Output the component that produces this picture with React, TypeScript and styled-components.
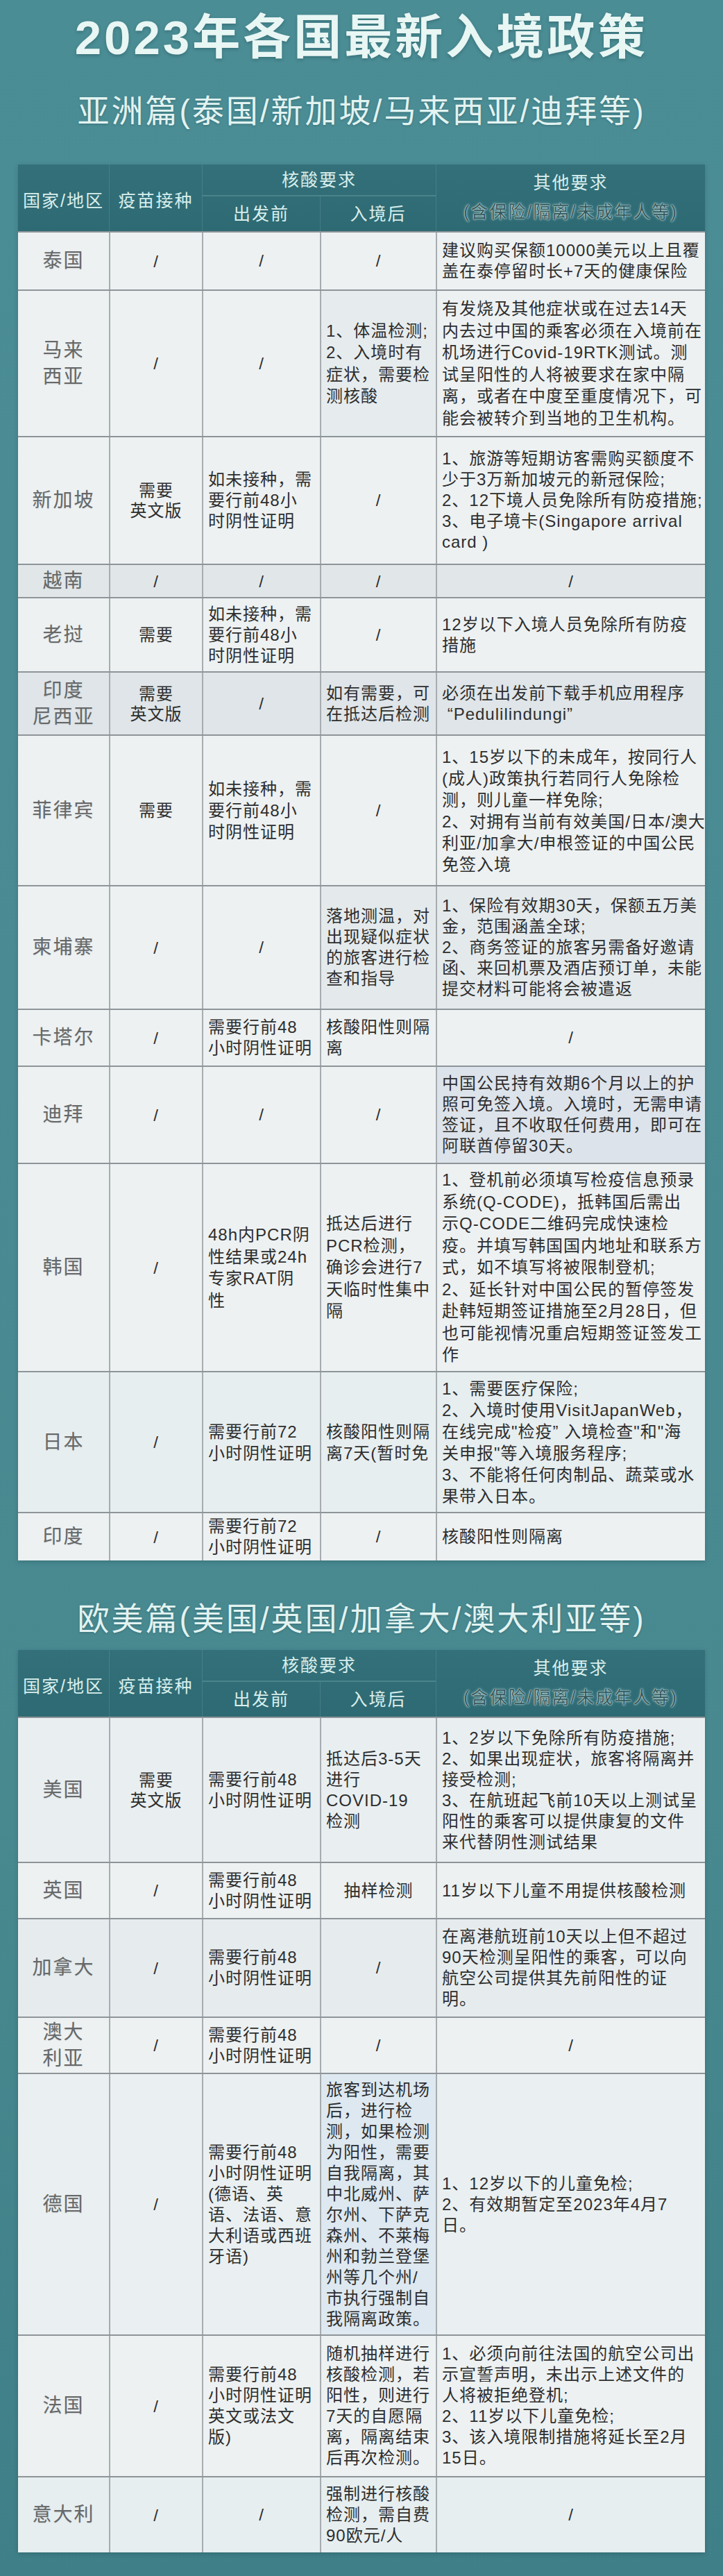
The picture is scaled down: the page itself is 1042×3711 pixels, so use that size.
import React from "react";
import styled, { createGlobalStyle } from "styled-components";

const GlobalStyle = createGlobalStyle`
  html, body { margin: 0; padding: 0; }
  body {
    background: #4a8a92;
    font-family: "Liberation Sans", "Noto Sans CJK SC", sans-serif;
  }
`;

const COLS = "131px 134px 170px 167px 1fr";

const Page = styled.div`
  width: 1042px;
  min-height: 3711px;
  box-sizing: border-box;
  padding: 20px 26px 34px;
  background: linear-gradient(180deg, #4b8d95 0%, #4a8b93 40%, #488990 70%, #3f7f87 100%);
  display: flex;
  flex-direction: column;
  align-items: center;
`;

const Title = styled.h1`
  margin: 0;
  font-family: "Liberation Sans", "Noto Sans CJK SC", sans-serif;
  font-weight: 700;
  font-size: 69px;
  letter-spacing: 4px;
  line-height: 70px;
  color: #e8f6f4;
  text-shadow: 0 2px 4px rgba(20, 60, 66, 0.35);
`;

const SectionTitle = styled.h2<{ $mt: number; $mb: number }>`
  margin: ${(p) => p.$mt}px 0 ${(p) => p.$mb}px;
  font-family: "Liberation Sans", "Noto Sans CJK SC", sans-serif;
  font-weight: 400;
  font-size: 46px;
  letter-spacing: 3px;
  line-height: 56px;
  color: #e2f3f1;
  text-shadow: 0 1px 3px rgba(20, 60, 66, 0.35);
`;

const Table = styled.div`
  width: 990px;
  display: flex;
  flex-direction: column;
  box-shadow: 0 2px 6px rgba(20, 50, 55, 0.25);
`;

const Head = styled.div`
  display: grid;
  grid-template-columns: ${COLS};
  grid-template-rows: 46px 50px;
  background: linear-gradient(180deg, #33707a 0%, #2e6a73 100%);
  color: #d8efed;
  font-size: 25px;
  letter-spacing: 2px;
  line-height: 36px;
`;

const HeadCell = styled.div<{ $col: string; $row: string; $divider?: boolean; $first?: boolean }>`
  grid-column: ${(p) => p.$col};
  grid-row: ${(p) => p.$row};
  display: flex;
  align-items: center;
  justify-content: center;
  border-left: ${(p) => (p.$first ? "none" : "1px solid rgba(160, 205, 208, 0.18)")};
  border-bottom: ${(p) => (p.$divider ? "2px solid rgba(150, 200, 204, 0.25)" : "none")};
`;

const HeadLow = styled(HeadCell)`
  align-items: flex-end;
  padding-bottom: 26px;
`;

const HeadStack = styled(HeadCell)`
  flex-direction: column;
  justify-content: flex-start;
  padding-top: 8px;
  gap: 6px;
`;

const HeadNote = styled.span`
  color: #34595d;
  text-shadow: 0 0 2px #cfe8e6, 0 0 1px #e4f3f2, 0 0 4px rgba(200, 232, 230, 0.6);
`;

const Row = styled.div<{ $h: number; $lh: number; $bg: string }>`
  display: grid;
  grid-template-columns: ${COLS};
  height: ${(p) => p.$h}px;
  box-sizing: border-box;
  border-top: 2px solid #8e9599;
  background: ${(p) => p.$bg};
  line-height: ${(p) => p.$lh}px;
`;

const Cell = styled.div<{ $center?: boolean; $bg?: string }>`
  display: flex;
  align-items: center;
  justify-content: ${(p) => (p.$center ? "center" : "flex-start")};
  text-align: ${(p) => (p.$center ? "center" : "left")};
  padding: 0 ${(p) => (p.$center ? "0" : "7px")};
  border-left: 2px solid #a6acaf;
  background: ${(p) => p.$bg ?? "transparent"};
  white-space: pre;
  font-size: 24px;
  letter-spacing: 1px;
  color: #2e2e2e;
  min-width: 0;
`;

const CountryCell = styled(Cell)`
  border-left: none;
  font-size: 28px;
  letter-spacing: 2px;
  line-height: 38px;
  color: #666869;
  text-shadow: 0 1px 1px rgba(0, 0, 0, 0.12);
`;

const VaccineCell = styled(Cell)`
  line-height: 29px;
`;

type RowData = {
  country: string;
  vac: string;
  before: string;
  after: string;
  other: string;
  h: number;
  lh?: number;
  bg?: string;
  afterCenter?: boolean;
  afterBg?: string;
  otherBg?: string;
};

const asia: RowData[] = [
  {
    country: "泰国",
    vac: "/",
    before: "/",
    after: "/",
    other: "建议购买保额10000美元以上且覆\n盖在泰停留时长+7天的健康保险",
    h: 84,
    lh: 30,
  },
  {
    country: "马来\n西亚",
    vac: "/",
    before: "/",
    after: "1、体温检测;\n2、入境时有\n症状，需要检\n测核酸",
    other:
      "有发烧及其他症状或在过去14天\n内去过中国的乘客必须在入境前在\n机场进行Covid-19RTK测试。测\n试呈阳性的人将被要求在家中隔\n离，或者在中度至重度情况下，可\n能会被转介到当地的卫生机构。",
    h: 211,
    lh: 31.5,
    afterBg: "#e6ecee",
  },
  {
    country: "新加坡",
    vac: "需要\n英文版",
    before: "如未接种，需\n要行前48小\n时阴性证明",
    after: "/",
    other:
      "1、旅游等短期访客需购买额度不\n少于3万新加坡元的新冠保险;\n2、12下境人员免除所有防疫措施;\n3、电子境卡(Singapore arrival\ncard )",
    h: 184,
    lh: 30,
  },
  { country: "越南", vac: "/", before: "/", after: "/", other: "/", h: 48, bg: "#e1e7e9" },
  {
    country: "老挝",
    vac: "需要",
    before: "如未接种，需\n要行前48小\n时阴性证明",
    after: "/",
    other: "12岁以下入境人员免除所有防疫\n措施",
    h: 107,
    lh: 30,
  },
  {
    country: "印度\n尼西亚",
    vac: "需要\n英文版",
    before: "/",
    after: "如有需要，可\n在抵达后检测",
    other: "必须在出发前下载手机应用程序\n \u201cPedulilindungi\u201d",
    h: 91,
    lh: 30,
    bg: "#dfe5e8",
  },
  {
    country: "菲律宾",
    vac: "需要",
    before: "如未接种，需\n要行前48小\n时阴性证明",
    after: "/",
    other:
      "1、15岁以下的未成年，按同行人\n(成人)政策执行若同行人免除检\n测，则儿童一样免除;\n2、对拥有当前有效美国/日本/澳大\n利亚/加拿大/申根签证的中国公民\n免签入境",
    h: 217,
    lh: 31,
  },
  {
    country: "柬埔寨",
    vac: "/",
    before: "/",
    after: "落地测温，对\n出现疑似症状\n的旅客进行检\n查和指导",
    other:
      "1、保险有效期30天，保额五万美\n金，范围涵盖全球;\n2、商务签证的旅客另需备好邀请\n函、来回机票及酒店预订单，未能\n提交材料可能将会被遣返",
    h: 178,
    lh: 30,
    afterBg: "#e4eaec",
    otherBg: "#e4eaec",
  },
  {
    country: "卡塔尔",
    vac: "/",
    before: "需要行前48\n小时阴性证明",
    after: "核酸阳性则隔\n离",
    other: "/",
    h: 82,
    lh: 30,
  },
  {
    country: "迪拜",
    vac: "/",
    before: "/",
    after: "/",
    other:
      "中国公民持有效期6个月以上的护\n照可免签入境。入境时，无需申请\n签证，且不收取任何费用，即可在\n阿联酋停留30天。",
    h: 140,
    lh: 30,
    otherBg: "#dde3ea",
  },
  {
    country: "韩国",
    vac: "/",
    before: "48h内PCR阴\n性结果或24h\n专家RAT阴\n性",
    after: "抵达后进行\nPCR检测，\n确诊会进行7\n天临时性集中\n隔",
    other:
      "1、登机前必须填写检疫信息预录\n系统(Q-CODE)，抵韩国后需出\n示Q-CODE二维码完成快速检\n疫。并填写韩国国内地址和联系方\n式，如不填写将被限制登机;\n2、延长针对中国公民的暂停签发\n赴韩短期签证措施至2月28日，但\n也可能视情况重启短期签证签发工\n作",
    h: 300,
    lh: 31.5,
  },
  {
    country: "日本",
    vac: "/",
    before: "需要行前72\n小时阴性证明",
    after: "核酸阳性则隔\n离7天(暂时免",
    other:
      "1、需要医疗保险;\n2、入境时使用VisitJapanWeb，\n在线完成\"检疫\u201d 入境检查\"和\"海\n关申报\"等入境服务程序;\n3、不能将任何肉制品、蔬菜或水\n果带入日本。",
    h: 203,
    lh: 31,
    bg: "#e7eef0",
  },
  {
    country: "印度",
    vac: "/",
    before: "需要行前72\n小时阴性证明",
    after: "/",
    other: "核酸阳性则隔离",
    h: 70,
    lh: 30,
  },
];

const west: RowData[] = [
  {
    country: "美国",
    vac: "需要\n英文版",
    before: "需要行前48\n小时阴性证明",
    after: "抵达后3-5天\n进行\nCOVID-19\n检测",
    other:
      "1、2岁以下免除所有防疫措施;\n2、如果出现症状，旅客将隔离并\n接受检测;\n3、在航班起飞前10天以上测试呈\n阳性的乘客可以提供康复的文件\n来代替阴性测试结果",
    h: 209,
    lh: 30,
    bg: "#e9eff1",
  },
  {
    country: "英国",
    vac: "/",
    before: "需要行前48\n小时阴性证明",
    after: "抽样检测",
    afterCenter: true,
    other: "11岁以下儿童不用提供核酸检测",
    h: 81,
    lh: 30,
  },
  {
    country: "加拿大",
    vac: "/",
    before: "需要行前48\n小时阴性证明",
    after: "/",
    other:
      "在离港航班前10天以上但不超过\n90天检测呈阳性的乘客，可以向\n航空公司提供其先前阳性的证\n明。",
    h: 142,
    lh: 30,
    bg: "#e6ecee",
  },
  {
    country: "澳大\n利亚",
    vac: "/",
    before: "需要行前48\n小时阴性证明",
    after: "/",
    other: "/",
    h: 81,
    lh: 30,
  },
  {
    country: "德国",
    vac: "/",
    before: "需要行前48\n小时阴性证明\n(德语、英\n语、法语、意\n大利语或西班\n牙语)",
    after:
      "旅客到达机场\n后，进行检\n测，如果检测\n为阳性，需要\n自我隔离，其\n中北威州、萨\n尔州、下萨克\n森州、不莱梅\n州和勃兰登堡\n州等几个州/\n市执行强制自\n我隔离政策。",
    other: "1、12岁以下的儿童免检;\n2、有效期暂定至2023年4月7\n日。",
    h: 377,
    lh: 30,
    bg: "#eaf0f1",
    afterBg: "#dde8f0",
  },
  {
    country: "法国",
    vac: "/",
    before: "需要行前48\n小时阴性证明\n英文或法文\n版)",
    after: "随机抽样进行\n核酸检测，若\n阳性，则进行\n7天的自愿隔\n离，隔离结束\n后再次检测。",
    other:
      "1、必须向前往法国的航空公司出\n示宣誓声明，未出示上述文件的\n人将被拒绝登机;\n2、11岁以下儿童免检;\n3、该入境限制措施将延长至2月\n15日。",
    h: 204,
    lh: 30,
  },
  {
    country: "意大利",
    vac: "/",
    before: "/",
    after: "强制进行核酸\n检测，需自费\n90欧元/人",
    other: "/",
    h: 110,
    lh: 30,
    bg: "#e6eef0",
  },
];

const isSlash = (t: string) => t === "/";

const TableHead: React.FC = () => (
  <Head>
    <HeadLow $col="1" $row="1 / 3" $first>
      国家/地区
    </HeadLow>
    <HeadLow $col="2" $row="1 / 3">
      疫苗接种
    </HeadLow>
    <HeadCell $col="3 / 5" $row="1" $divider>
      核酸要求
    </HeadCell>
    <HeadCell $col="3" $row="2">
      出发前
    </HeadCell>
    <HeadCell $col="4" $row="2">
      入境后
    </HeadCell>
    <HeadStack $col="5" $row="1 / 3">
      <span>其他要求</span>
      <HeadNote>(含保险/隔离/未成年人等)</HeadNote>
    </HeadStack>
  </Head>
);

const PolicyTable: React.FC<{ rows: RowData[] }> = ({ rows }) => (
  <Table>
    <TableHead />
    {rows.map((r) => (
      <Row key={r.country} $h={r.h} $lh={r.lh ?? 31} $bg={r.bg ?? "#edf1f2"}>
        <CountryCell $center>{r.country}</CountryCell>
        <VaccineCell $center>{r.vac}</VaccineCell>
        <Cell $center={isSlash(r.before)}>{r.before}</Cell>
        <Cell $center={isSlash(r.after) || r.afterCenter} $bg={r.afterBg}>
          {r.after}
        </Cell>
        <Cell $center={isSlash(r.other)} $bg={r.otherBg}>
          {r.other}
        </Cell>
      </Row>
    ))}
  </Table>
);

export default function App() {
  return (
    <>
      <GlobalStyle />
      <Page>
        <Title>2023年各国最新入境政策</Title>
        <SectionTitle $mt={42} $mb={49}>
          亚洲篇(泰国/新加坡/马来西亚/迪拜等)
        </SectionTitle>
        <PolicyTable rows={asia} />
        <SectionTitle $mt={56} $mb={17}>
          欧美篇(美国/英国/加拿大/澳大利亚等)
        </SectionTitle>
        <PolicyTable rows={west} />
      </Page>
    </>
  );
}
